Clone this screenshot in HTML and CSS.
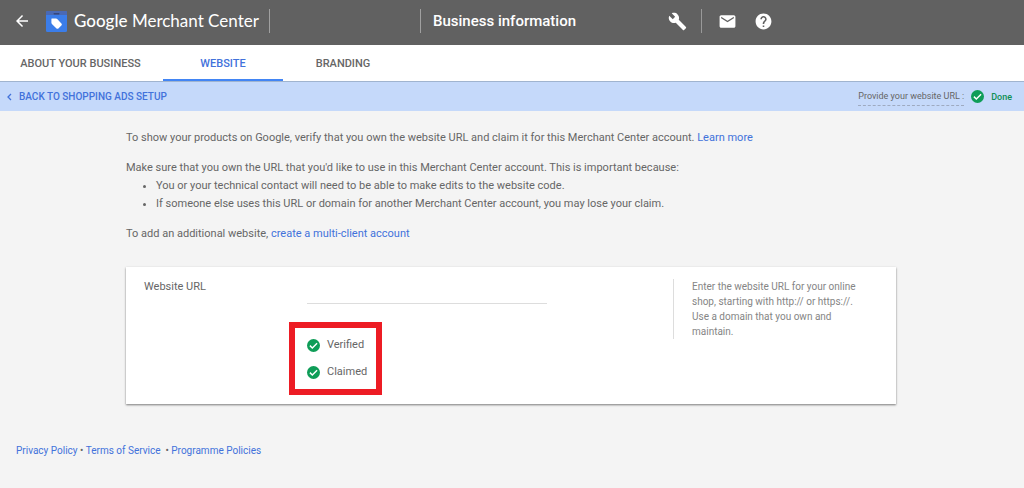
FILE: index.html
```
<!DOCTYPE html>
<html lang="en-GB">
<head>
<meta charset="utf-8">
<meta name="viewport" content="width=device-width, initial-scale=1">
<title>Business information - Google Merchant Center</title>
<link rel="stylesheet" href="styles.css">
</head>
<body>
<svg class="symbols" aria-hidden="true">
  <symbol id="check" viewBox="2 2 20 20">
    <circle cx="12" cy="12" r="10" fill="#0f9d58"/>
    <path d="M6.5 12.2l3.7 3.7 7.3-7.3" fill="none" stroke="#fff" stroke-width="2.2"/>
  </symbol>
</svg>
<header class="topbar">
  <button class="icon-button back" type="button" aria-label="Back">
    <svg width="18" height="18" viewBox="0 0 24 24"><path fill="currentColor" d="M20 11H7.83l5.59-5.59L12 4l-8 8 8 8 1.41-1.41L7.83 13H20v-2z"/></svg>
  </button>
  <a class="brand" href="#">
    <svg width="21" height="21" viewBox="0 0 21 21" aria-hidden="true">
      <rect width="21" height="21" rx="1.5" fill="#3b7de9"/>
      <path fill="#4a69b4" d="M1.5 0h18A1.5 1.5 0 0 1 21 1.5V4H0V1.5A1.5 1.5 0 0 1 1.500 0z"/>
      <rect x="7.500" y="2" width="6" height="1.400" rx=".7" fill="#36477a"/>
      <path fill="#fff" d="M5.800 7.600h4.300c.4 0 .8.200 1.100.5l4.200 4.400c.6.600.6 1.300 0 1.900l-3 3c-.6.600-1.300.6-1.900 0l-4.600-4.500c-.3-.3-.5-.7-.5-1.100V8.200c0-.3.100-.6.400-.6z"/>
    </svg>
    <span class="brand-name"><span class="brand-google">Google</span> Merchant Center</span>
  </a>
  <div class="account"></div>
  <h1 class="page-title">Business information</h1>
  <div class="tools">
    <button class="icon-button" type="button" aria-label="Tools">
      <svg width="19" height="19" viewBox="0 0 24 24"><path fill="currentColor" d="M22.700 19l-9.100-9.100c.9-2.300.4-5-1.500-6.900-2-2-5-2.400-7.400-1.300L9 6 6 9 1.600 4.700C.4 7.100.9 10.100 2.900 12.100c1.900 1.900 4.600 2.400 6.900 1.500l9.100 9.100c.4.4 1 .4 1.400 0l2.300-2.300c.5-.4.5-1.100.1-1.400z"/></svg>
    </button>
    <span class="divider"></span>
    <button class="icon-button" type="button" aria-label="Messages">
      <svg width="19" height="19" viewBox="0 0 24 24"><path fill="currentColor" d="M20 4H4c-1.100 0-2 .9-2 2v12c0 1.100.9 2 2 2h16c1.100 0 2-.9 2-2V6c0-1.100-.9-2-2-2zm0 4l-8 5-8-5V6l8 5 8-5v2z"/></svg>
    </button>
    <button class="icon-button" type="button" aria-label="Help">
      <svg width="19" height="19" viewBox="0 0 24 24"><path fill="currentColor" d="M12 2C6.480 2 2 6.480 2 12s4.480 10 10 10 10-4.480 10-10S17.520 2 12 2zm1 17h-2v-2h2v2zm2.070-7.750l-.9.920C13.450 12.900 13 13.500 13 15h-2v-.5c0-1.100.450-2.100 1.170-2.830l1.240-1.260c.370-.360.590-.860.590-1.410 0-1.100-.9-2-2-2s-2 .9-2 2H8c0-2.210 1.790-4 4-4s4 1.790 4 4c0 .880-.360 1.680-.930 2.250z"/></svg>
    </button>
  </div>
</header>
<nav class="tabs">
  <a class="tab tab-about" href="#">ABOUT YOUR BUSINESS</a>
  <a class="tab tab-active" href="#" aria-current="page">WEBSITE</a>
  <a class="tab" href="#">BRANDING</a>
</nav>
<div class="setup-bar">
  <a class="setup-back" href="#">
    <svg width="5" height="8" viewBox="0 0 5 8" aria-hidden="true"><path d="M4 1L1 4l3 3" fill="none" stroke="currentColor" stroke-width="1.300"/></svg>
    BACK TO SHOPPING ADS SETUP
  </a>
  <div class="setup-status">
    <span class="setup-step">Provide your website URL :</span>
    <svg class="check" aria-hidden="true"><use href="#check"/></svg>
    <span class="setup-done">Done</span>
  </div>
</div>
<main class="content">
  <p class="para">To show your products on Google, verify that you own the website URL and claim it for this Merchant Center account. <a href="#">Learn more</a></p>
  <p class="lead">Make sure that you own the URL that you'd like to use in this Merchant Center account. This is important because:</p>
  <ul class="reasons">
    <li>You or your technical contact will need to be able to make edits to the website code.</li>
    <li>If someone else uses this URL or domain for another Merchant Center account, you may lose your claim.</li>
  </ul>
  <p class="para">To add an additional website, <a href="#">create a multi-client account</a></p>
  <section class="card">
    <label class="field-label" for="website-url">Website URL</label>
    <div class="field">
      <input class="field-input" id="website-url" type="url">
      <ul class="statuses">
        <li><svg class="check" aria-hidden="true"><use href="#check"/></svg>Verified</li>
        <li><svg class="check" aria-hidden="true"><use href="#check"/></svg>Claimed</li>
      </ul>
    </div>
    <p class="hint">Enter the website URL for your online shop, starting with http:// or https://. Use a domain that you own and maintain.</p>
  </section>
</main>
<footer class="footer">
  <a href="#">Privacy Policy</a> • <a href="#">Terms of Service</a>&nbsp; • <a href="#">Programme Policies</a>
</footer>
</body>
</html>
```
FILE: styles.css
```
* {
  box-sizing: border-box;
}

body {
  margin: 0;
  background: #f4f4f4;
  color: #666;
  font: 11px/18px Roboto, "Liberation Sans", sans-serif;
}

a {
  color: #4272db;
  text-decoration: none;
}

p,
ul,
h1 {
  margin: 0;
  padding: 0;
}

.symbols {
  position: absolute;
  width: 0;
  height: 0;
}

.topbar {
  display: flex;
  align-items: center;
  height: 45px;
  padding: 0 13px 3px;
  background: #616161;
  color: #fff;
}

.icon-button {
  display: flex;
  padding: 0;
  border: 0;
  background: none;
  color: inherit;
}

.brand {
  display: flex;
  flex: none;
  align-items: center;
  gap: 7px;
  width: 223px;
  margin-left: 15px;
  color: #fff;
}

.brand-name {
  font: 17px/24px Lato, sans-serif;
  white-space: nowrap;
}

.brand-google {
  font-weight: 500;
}

.account {
  width: 152px;
  height: 24px;
  border: solid #a0a0a0;
  border-width: 0 1px;
}

.page-title {
  margin-left: 12px;
  font-size: 15px;
  font-weight: 500;
  white-space: nowrap;
}

.tools {
  display: flex;
  align-items: center;
  gap: 17px;
  margin-left: 92px;
}

.divider {
  width: 1px;
  height: 24px;
  margin-left: -3px;
  margin-right: -1px;
  background: #999;
}

.tabs {
  display: flex;
  height: 37px;
  border-bottom: 1px solid #a0b4cf;
  background: #fff;
}

.tab {
  flex: none;
  width: 120px;
  color: #666;
  font-weight: 500;
  line-height: 37px;
  text-align: center;
}

.tab-about {
  width: 163px;
  padding-right: 2px;
}

.tab-active {
  border-bottom: 2px solid #4285f4;
  color: #4272db;
}

.setup-bar {
  display: flex;
  align-items: center;
  justify-content: space-between;
  height: 29px;
  padding: 0 12px 0 7px;
  background: #c5d9fa;
}

.setup-back {
  display: flex;
  align-items: center;
  gap: 7px;
  font-size: 10px;
  font-weight: 500;
}

.setup-status {
  display: flex;
  align-items: center;
  gap: 7px;
  font-size: 9px;
}

.setup-step {
  border-bottom: 1px dashed #9eaac0;
}

.setup-done {
  color: #0f8f54;
  font-weight: 500;
}

.check {
  flex: none;
  width: 13px;
  height: 13px;
}

.content {
  margin: 0 128px 0 126px;
  padding-top: 18px;
}

.para {
  margin-bottom: 12px;
}

.reasons {
  margin-bottom: 12px;
  padding-left: 30px;
}

.card {
  display: grid;
  grid-template-columns: 163px 240px 1fr 205px;
  margin-top: 24px;
  padding: 12px 18px 9px;
  background: #fff;
  box-shadow: 0 1px 2px rgba(0, 0, 0, 0.5);
}

.field-label {
  line-height: 16px;
}

.field-input {
  display: block;
  width: 100%;
  height: 25px;
  padding: 0;
  border: 0;
  border-bottom: 1px solid #ddd;
  background: none;
  color: inherit;
  font: inherit;
}

.statuses {
  display: flex;
  flex-direction: column;
  gap: 9px;
  width: 93px;
  margin: 18px 0 0 -18px;
  padding: 8px 0 8px 12px;
  border: 6px solid #ed1c24;
  list-style: none;
}

.statuses li {
  display: flex;
  align-items: center;
  gap: 7px;
}

.hint {
  grid-column: 4;
  align-self: start;
  padding: 0 18px;
  border-left: 1px solid #ddd;
  color: #858585;
  font-size: 10px;
  line-height: 15px;
}

.footer {
  padding: 38px 16px;
  font-size: 10px;
}
```
